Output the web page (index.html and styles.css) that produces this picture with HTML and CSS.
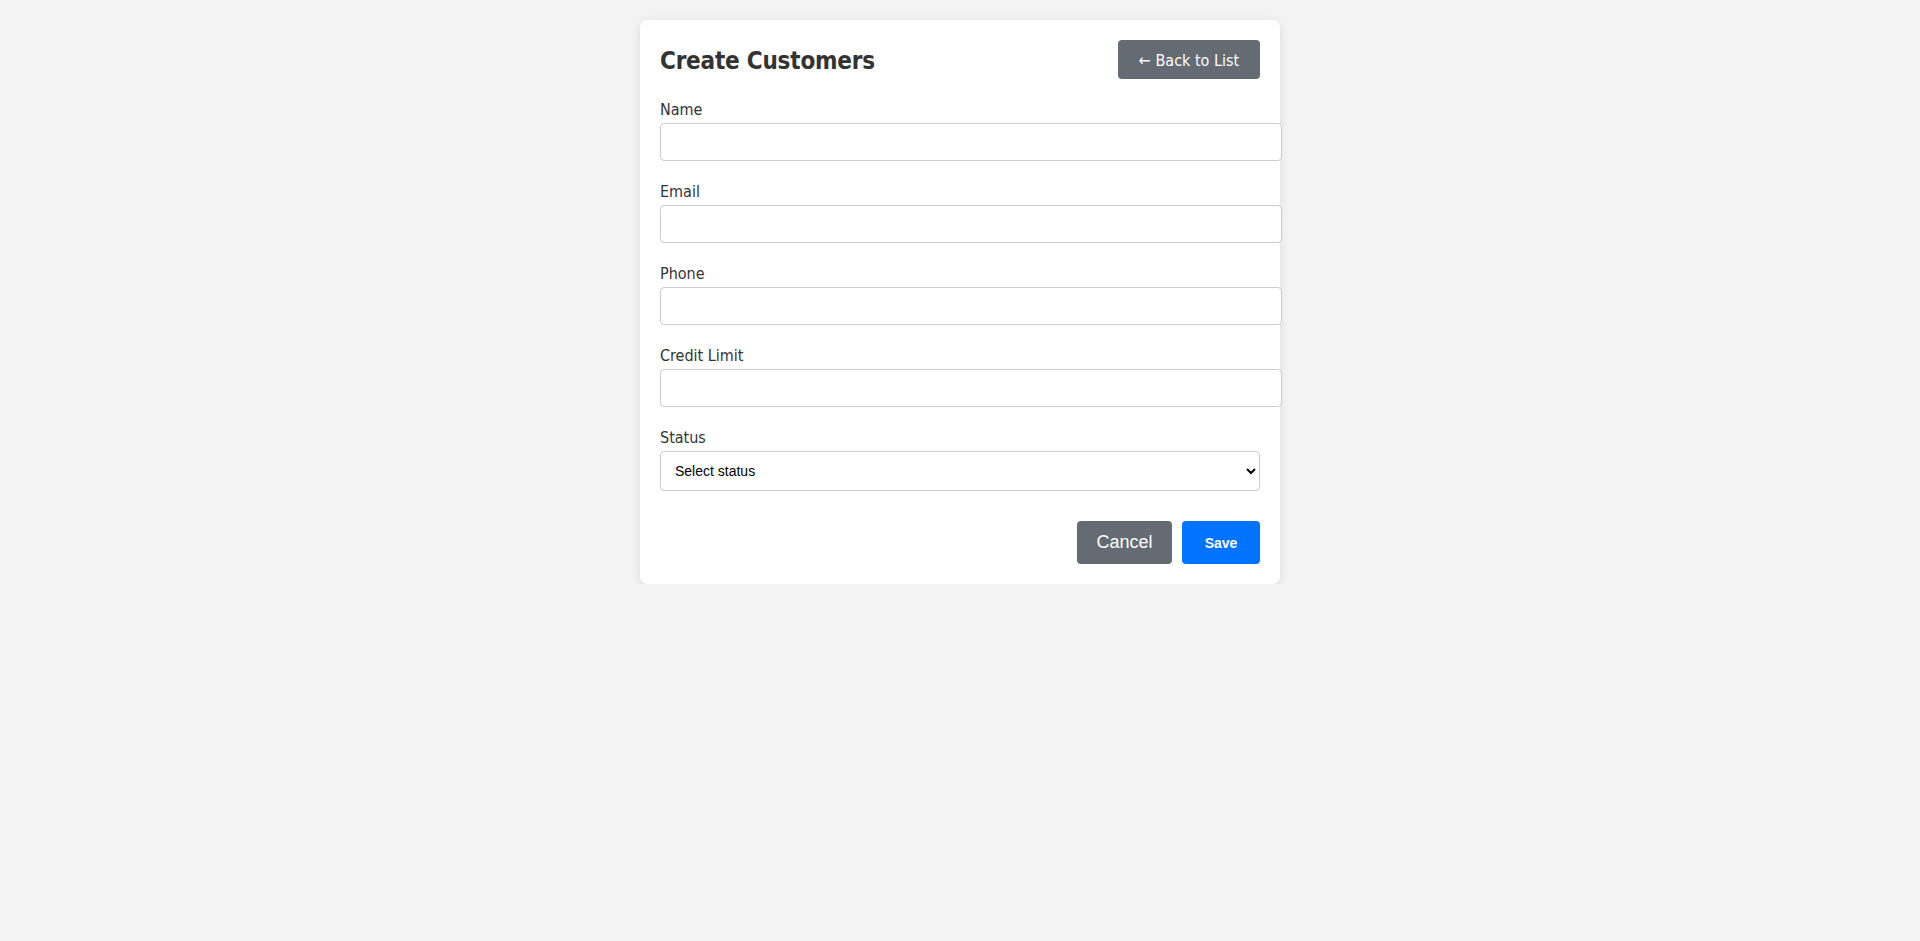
FILE: index.html
```html
<!DOCTYPE html>
<html lang="en">
<head>
<meta charset="utf-8">
<title>Create Customers</title>
<link rel="stylesheet" href="styles.css">
</head>
<body>
<div class="card">
  <div class="card-header">
    <h2 class="title">Create Customers</h2>
    <a class="btn btn-secondary btn-back" href="#">← Back to List</a>
  </div>
  <form class="form">
    <div class="form-group">
      <label class="label" for="name">Name</label>
      <input class="input" id="name" type="text">
    </div>
    <div class="form-group">
      <label class="label" for="email">Email</label>
      <input class="input" id="email" type="email">
    </div>
    <div class="form-group">
      <label class="label" for="phone">Phone</label>
      <input class="input" id="phone" type="text">
    </div>
    <div class="form-group">
      <label class="label" for="credit">Credit Limit</label>
      <input class="input" id="credit" type="text">
    </div>
    <div class="form-group">
      <label class="label" for="status">Status</label>
      <select class="select" id="status">
        <option>Select status</option>
        <option>Active</option>
        <option>Inactive</option>
      </select>
    </div>
    <div class="form-actions">
      <button type="button" class="btn btn-secondary btn-cancel">Cancel</button>
      <button type="button" class="btn btn-primary btn-save">Save</button>
    </div>
  </form>
</div>
</body>
</html>
```
FILE: styles.css
```css
html, body {
  margin: 0;
  padding: 0;
}
body {
  background: #f3f3f3;
  font-family: "DejaVu Sans Condensed", "DejaVu Sans", sans-serif;
  color: #333333;
  padding-top: 20px;
}
.card {
  width: 600px;
  margin: 0 auto;
  background: #ffffff;
  border-radius: 8px;
  padding: 20px;
  box-shadow: 0 2px 10px rgba(0, 0, 0, 0.1);
}
.card-header {
  display: flex;
  justify-content: space-between;
  align-items: center;
  margin-bottom: 20px;
}
.title {
  margin: 0;
  padding-top: 3px;
  font-size: 24px;
  font-weight: bold;
  color: #333333;
  letter-spacing: -0.2px;
}
.btn {
  border: none;
  border-radius: 4px;
  color: #ffffff;
  text-decoration: none;
  cursor: pointer;
  display: inline-flex;
  align-items: center;
  justify-content: center;
  box-sizing: border-box;
}
.btn-secondary {
  background: #646b73;
}
.btn-primary {
  background: #0073ff;
}
.btn-back {
  width: 142px;
  height: 39px;
  padding-top: 1px;
  font-size: 16px;
  font-family: "DejaVu Sans Condensed", "DejaVu Sans", sans-serif;
}
.form-group {
  margin-bottom: 20px;
}
.label {
  display: block;
  font-size: 16px;
  line-height: 19px;
  padding-top: 1px;
  margin-bottom: 4px;
  color: #333333;
}
.input {
  display: block;
  width: 100%;
  padding: 10px;
  box-sizing: content-box;
  height: 16px;
  border: 1px solid #cccccc;
  border-radius: 4px;
  font-family: "Liberation Sans", Arial, sans-serif;
  font-size: 13px;
  background: #ffffff;
}
.select {
  display: block;
  width: 100%;
  box-sizing: border-box;
  height: 40px;
  padding: 0 10px;
  border: 1px solid #cccccc;
  border-radius: 4px;
  font-family: "Liberation Sans", Arial, sans-serif;
  font-size: 14px;
  color: #000000;
  background: #ffffff;
}
.form-actions {
  display: flex;
  justify-content: flex-end;
  gap: 10px;
  margin-top: 30px;
}
.btn-cancel {
  width: 95px;
  height: 43px;
  font-family: "Liberation Sans", Arial, sans-serif;
  font-size: 18px;
}
.btn-save {
  width: 78px;
  height: 43px;
  font-family: "Liberation Sans", Arial, sans-serif;
  font-size: 14px;
  font-weight: bold;
}
```
